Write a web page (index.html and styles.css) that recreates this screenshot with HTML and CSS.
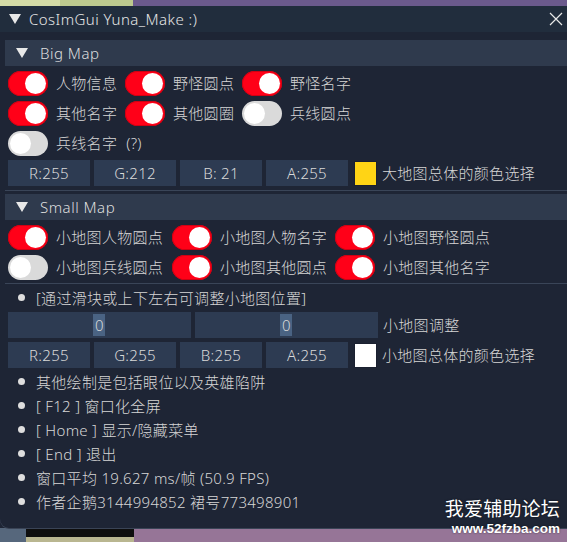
FILE: index.html
```html
<!DOCTYPE html>
<html lang="zh">
<head>
<meta charset="utf-8">
<title>CosImGui</title>
<link rel="stylesheet" href="styles.css">
</head>
<body>
<div class="window">
  <div class="titlebar">
    <svg class="tri" width="12" height="10" viewBox="0 0 12 10"><polygon points="0,0 12,0 6,10" fill="#e8e8e8"/></svg>
    <span class="title">CosImGui Yuna_Make :)</span>
    <svg class="close" width="14" height="14" viewBox="0 0 14 14"><path d="M1 1 L13 13 M13 1 L1 13" stroke="#e8e8e8" stroke-width="1.2" fill="none"/></svg>
  </div>
  <div class="content">
    <div class="header">
      <svg class="tri" width="12" height="10" viewBox="0 0 12 10"><polygon points="0,0 12,0 6,10" fill="#e8e8e8"/></svg>
      <span>Big Map</span>
    </div>
    <div class="grid big">
      <div class="item"><span class="tog on"></span><span>人物信息</span></div>
      <div class="item"><span class="tog on"></span><span>野怪圆点</span></div>
      <div class="item"><span class="tog on"></span><span>野怪名字</span></div>
      <div class="item"><span class="tog on"></span><span>其他名字</span></div>
      <div class="item"><span class="tog on"></span><span>其他圆圈</span></div>
      <div class="item"><span class="tog"></span><span>兵线圆点</span></div>
      <div class="item wide"><span class="tog"></span><span>兵线名字</span><span class="help">(?)</span></div>
    </div>
    <div class="colorrow">
      <div class="frame">R:255</div>
      <div class="frame">G:212</div>
      <div class="frame">B: 21</div>
      <div class="frame">A:255</div>
      <div class="swatch yellow"></div>
      <span class="rowlabel">大地图总体的颜色选择</span>
    </div>
    <div class="sep sep1"></div>
    <div class="header h2">
      <svg class="tri" width="12" height="10" viewBox="0 0 12 10"><polygon points="0,0 12,0 6,10" fill="#e8e8e8"/></svg>
      <span>Small Map</span>
    </div>
    <div class="grid small">
      <div class="item"><span class="tog on"></span><span>小地图人物圆点</span></div>
      <div class="item"><span class="tog on"></span><span>小地图人物名字</span></div>
      <div class="item"><span class="tog on"></span><span>小地图野怪圆点</span></div>
      <div class="item"><span class="tog"></span><span>小地图兵线圆点</span></div>
      <div class="item"><span class="tog on"></span><span>小地图其他圆点</span></div>
      <div class="item"><span class="tog on"></span><span>小地图其他名字</span></div>
    </div>
    <div class="sep sep2"></div>
    <div class="bullet">[通过滑块或上下左右可调整小地图位置]</div>
    <div class="colorrow">
      <div class="frame slider"><span class="grab"></span><span class="val">0</span></div>
      <div class="frame slider"><span class="grab"></span><span class="val">0</span></div>
      <span class="rowlabel">小地图调整</span>
    </div>
    <div class="colorrow">
      <div class="frame">R:255</div>
      <div class="frame">G:255</div>
      <div class="frame">B:255</div>
      <div class="frame">A:255</div>
      <div class="swatch white"></div>
      <span class="rowlabel">小地图总体的颜色选择</span>
    </div>
    <div class="bullet">其他绘制是包括眼位以及英雄陷阱</div>
    <div class="bullet">[ F12 ] 窗口化全屏</div>
    <div class="bullet">[ Home ] 显示/隐藏菜单</div>
    <div class="bullet">[ End ] 退出</div>
    <div class="bullet">窗口平均 19.627 ms/帧 (50.9 FPS)</div>
    <div class="bullet">作者企鹅3144994852 裙号773498901</div>
  </div>
</div>
<div class="watermark">
  <div class="wm1">我爱辅助论坛</div>
  <div class="wm2">www.52fzba.com</div>
</div>
</body>
</html>
```
FILE: styles.css
```css
html, body {
  margin: 0;
  padding: 0;
}
body {
  width: 567px;
  height: 542px;
  overflow: hidden;
  position: relative;
  font-family: "Noto Sans", "Noto Sans CJK SC", sans-serif;
  font-weight: 300;
  font-size: 15px;
  line-height: 20px;
  letter-spacing: 0.3px;
  color: #d6d6d6;
  background:
    linear-gradient(90deg, #d3dba6 0 60px, #bcc98e 60px 133px, #6b5a8d 133px 100%) top left / 100% 6px no-repeat,
    linear-gradient(#0e0e0e 0 9px, #b9b690 9px) 26px bottom / 108px 14px no-repeat,
    linear-gradient(90deg, #56677c 0 26px, #111 26px 134px, #967597 134px) left bottom / 100% 14px no-repeat,
    #1e2535;
}
.window {
  margin-top: 6px;
  height: 522px;
  width: 572px;
  background: #1e2535;
  border-bottom-left-radius: 9px;
  box-shadow: 0 1px 0 #3a4456;
  overflow: hidden;
}
.titlebar {
  height: 26px;
  background: #212d3d;
  display: flex;
  align-items: center;
  padding-left: 9px;
  color: #e6e6e6;
}
.titlebar .title {
  margin-left: 8px;
  letter-spacing: 0.45px;
}
.titlebar .close {
  margin-left: auto;
  margin-right: 9px;
}
.content {
  padding: 8px 0 0 8px;
  display: flex;
  flex-direction: column;
  gap: 4px;
}
.header {
  height: 26px;
  margin-left: -3px;
  background: #2f3a4d;
  display: flex;
  align-items: center;
  padding-left: 11px;
  gap: 12px;
  color: #dedede;
  letter-spacing: 0.5px;
}
.grid {
  display: grid;
  grid-auto-rows: 26px;
  row-gap: 4px;
}
.grid.big {
  grid-template-columns: 117px 117px 117px;
}
.grid.small {
  grid-template-columns: 164px 163px 163px;
}
.item {
  display: flex;
  align-items: center;
  gap: 8px;
  white-space: nowrap;
}
.item.wide {
  grid-column: span 3;
}
.help {
  margin-left: 1px;
}
.tog {
  position: relative;
  flex: 0 0 auto;
  width: 40px;
  height: 25px;
  border-radius: 13px;
  background: #dadada;
  box-sizing: border-box;
}
.tog::after {
  content: "";
  position: absolute;
  top: 2px;
  left: 2px;
  width: 21px;
  height: 21px;
  border-radius: 50%;
  background: #ffffff;
}
.tog.on {
  background: #ff0018;
  box-shadow: inset 0 0 0 1px #d00012;
}
.tog.on::after {
  left: auto;
  right: 2px;
}
.colorrow {
  display: flex;
  align-items: center;
  gap: 4px;
  height: 26px;
}
.frame {
  flex: 0 0 82px;
  height: 26px;
  background: #2d3b52;
  display: flex;
  align-items: center;
  justify-content: center;
  color: #d9d9d9;
}
.frame.slider {
  flex: 0 0 183px;
  position: relative;
}
.grab {
  position: absolute;
  top: 2px;
  bottom: 2px;
  left: 85px;
  width: 12px;
  background: #4a6383;
}
.val {
  position: relative;
}
.swatch {
  flex: 0 0 23px;
  height: 25px;
  margin-left: 2px;
  box-sizing: border-box;
  border: 1px solid #1a2030;
}
.swatch.yellow {
  background: #ffd415;
}
.swatch.white {
  background: #ffffff;
}
.rowlabel {
  margin-left: 1px;
  white-space: nowrap;
}
.sep {
  height: 1px;
  margin-left: -3px;
  background: #3a4558;
}
.sep1 {
  margin-bottom: -1px;
}
.sep2 {
  margin-top: -1px;
}
.bullet {
  height: 20px;
  display: flex;
  align-items: center;
  padding-left: 28px;
  position: relative;
  white-space: nowrap;
}
.bullet::before {
  content: "";
  position: absolute;
  left: 10px;
  top: 6px;
  width: 7px;
  height: 7px;
  border-radius: 50%;
  background: #dedede;
}
.watermark {
  position: absolute;
  right: 7px;
  bottom: 5px;
  text-align: right;
  color: #ffffff;
  text-shadow: 0 0 2px rgba(0,0,0,0.6);
  font-family: "Noto Sans CJK SC", sans-serif;
  font-weight: 400;
  letter-spacing: 0;
}
.wm1 {
  font-size: 19px;
  line-height: 22px;
  letter-spacing: 0.2px;
}
.wm2 {
  font-family: "Liberation Sans", Arial, sans-serif;
  font-weight: bold;
  font-size: 13.5px;
  line-height: 16px;
  margin-top: 2px;
}
```
